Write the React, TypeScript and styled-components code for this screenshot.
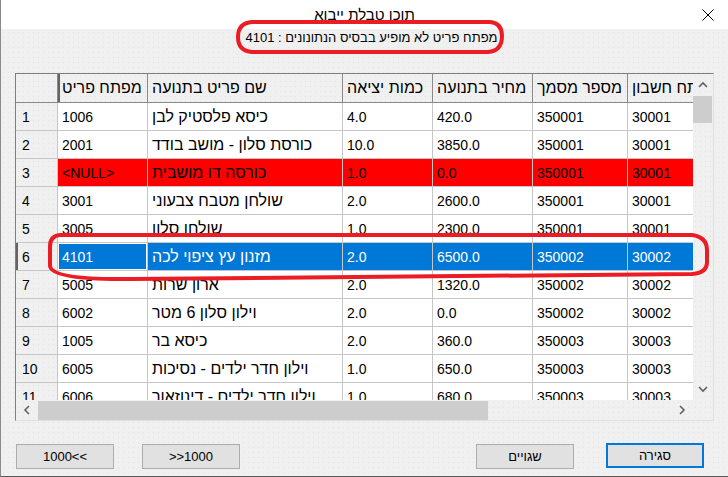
import React from "react";
import styled, { createGlobalStyle, css } from "styled-components";

const GlobalStyle = createGlobalStyle`
  html, body { margin: 0; padding: 0; background: #f0f0f0; }
  body { font-family: "Liberation Sans", "DejaVu Sans", sans-serif; }
  #root { width: 728px; height: 477px; }
`;

const dots = css`
  background-color: #f0f0f0;
  background-image: radial-gradient(circle, #e3e3e3 0.7px, transparent 1px);
  background-size: 5px 5px;
`;

const Window = styled.div`
  position: relative;
  width: 728px;
  height: 477px;
  box-sizing: border-box;
  border-left: 1px solid #8a8a8a;
  border-bottom: 1px solid #5a5a5a;
  display: flex;
  flex-direction: column;
  overflow: hidden;
  ${dots}
`;

const TitleBar = styled.div`
  flex: none;
  height: 29px;
  background: #fff;
  display: grid;
  grid-template-columns: 1fr auto 1fr;
  align-items: center;
`;

const Title = styled.div`
  grid-column: 2;
  font-size: 15px;
  color: #000;
  direction: rtl;
`;

const CloseBox = styled.div`
  grid-column: 3;
  justify-self: end;
  margin-right: 14px;
  width: 12px;
  height: 12px;
  display: flex;
`;

const LabelRow = styled.div`
  flex: none;
  height: 44px;
  text-align: center;
  padding-left: 14px;
  font-size: 13px;
  line-height: 17px;
  color: #000;
  direction: rtl;
`;

const TableFrame = styled.div`
  flex: none;
  margin-left: 14px;
  width: 699px;
  height: 348px;
  box-sizing: border-box;
  border: 1px solid;
  border-color: #7e7e7e #e0e0e0 #e0e0e0 #7e7e7e;
  display: grid;
  grid-template-columns: 677px 20px;
  grid-template-rows: 326px 20px;
`;

const Viewport = styled.div`
  overflow: hidden;
  background: #fff;
  font-size: 14px;
`;

type Variant = "normal" | "error" | "selected";

const Row = styled.div<{ $variant?: Variant; $header?: boolean }>`
  display: flex;
  height: ${(p) => (p.$header ? 29 : 28)}px;
  width: max-content;
  background: ${(p) =>
    p.$variant === "error" ? "#ff0000" : p.$variant === "selected" ? "#0078d7" : "#fff"};
  color: ${(p) => (p.$variant === "selected" ? "#fff" : "#000")};
`;

const Cell = styled.div<{ $w: number; $focus?: boolean; $heb?: boolean }>`
  flex: none;
  width: ${(p) => p.$w}px;
  box-sizing: border-box;
  padding-left: 4px;
  border-right: 1px solid #c6c6c6;
  border-bottom: 1px solid #c6c6c6;
  display: flex;
  align-items: center;
  white-space: nowrap;
  overflow: hidden;
  ${(p) =>
    p.$heb &&
    css`
      font-size: 16px;
    `}
  ${(p) => p.$focus && css`box-shadow: inset 0 0 0 1px #fff;`}
`;

const HeadCell = styled(Cell)<{ $current?: boolean }>`
  ${dots}
  color: #000;
  border-right-color: #8a8a8a;
  border-bottom-color: #8a8a8a;
  ${(p) => p.$current && css`box-shadow: inset 2px 0 0 #646464;`}
`;

const RowNumCell = styled.div<{ $current?: boolean; $header?: boolean }>`
  flex: none;
  width: 42px;
  box-sizing: border-box;
  padding-left: 6px;
  border-right: 1px solid ${(p) => (p.$header ? "#8a8a8a" : "#c6c6c6")};
  border-bottom: 1px solid ${(p) => (p.$header ? "#8a8a8a" : "#c6c6c6")};
  display: flex;
  align-items: center;
  color: #000;
  ${dots}
  ${(p) => p.$current && css`box-shadow: inset 2px 0 0 #646464;`}
`;

const VScroll = styled.div`
  grid-row: 1;
  grid-column: 2;
  display: flex;
  flex-direction: column;
  ${dots}
`;

const HScroll = styled.div`
  grid-row: 2;
  grid-column: 1;
  display: flex;
  ${dots}
`;

const Corner = styled.div`
  grid-row: 2;
  grid-column: 2;
  ${dots}
`;

const ArrowBox = styled.div<{ $vertical?: boolean }>`
  flex: none;
  width: ${(p) => (p.$vertical ? "100%" : "22px")};
  height: ${(p) => (p.$vertical ? "22px" : "100%")};
  display: flex;
  align-items: center;
  justify-content: center;
`;

const Track = styled.div<{ $vertical?: boolean }>`
  flex: 1;
  display: flex;
  flex-direction: ${(p) => (p.$vertical ? "column" : "row")};
`;

const Thumb = styled.div<{ $vertical?: boolean; $size: number }>`
  flex: none;
  background: #cdcdcd;
  ${(p) =>
    p.$vertical
      ? css`height: ${p.$size}px; width: 19px;`
      : css`width: ${p.$size}px; height: 19px; margin-top: 1px;`}
`;

const ButtonRow = styled.div`
  flex: none;
  margin-top: 23px;
  padding: 0 24px 0 15px;
  display: flex;
  justify-content: space-between;
`;

const ButtonGroup = styled.div<{ $gap: number }>`
  display: flex;
  gap: ${(p) => p.$gap}px;
  align-items: flex-start;
`;

const Button = styled.button<{ $primary?: boolean }>`
  width: 98px;
  height: 25px;
  box-sizing: border-box;
  margin: ${(p) => (p.$primary ? "-1px 0 0 0" : "0")};
  padding: 0;
  background: #e1e1e1;
  border: ${(p) => (p.$primary ? "2px solid #0078d7" : "1px solid #adadad")};
  font-family: "Liberation Sans", "DejaVu Sans", sans-serif;
  font-size: 13px;
  color: #000;
`;

const Overlay = styled.svg`
  position: absolute;
  left: -1px;
  top: 0;
  width: 728px;
  height: 477px;
  pointer-events: none;
`;

const Chevron = ({ dir }: { dir: "up" | "down" | "left" | "right" }) => {
  const pts: Record<string, string> = {
    up: "1,6 5,2 9,6",
    down: "1,2 5,6 9,2",
    left: "6,1 2,5 6,9",
    right: "2,1 6,5 2,9",
  };
  const vertical = dir === "up" || dir === "down";
  return (
    <svg width={vertical ? 10 : 8} height={vertical ? 8 : 10} viewBox={vertical ? "0 0 10 8" : "0 0 8 10"}>
      <polyline points={pts[dir]} fill="none" stroke="#606060" strokeWidth="1.6" />
    </svg>
  );
};

const isHeb = (s: string) => /[\u0590-\u05FF]/.test(s);

const columns = [
  { title: "מפתח פריט", w: 90 },
  { title: "שם פריט בתנועה", w: 195 },
  { title: "כמות יציאה", w: 90 },
  { title: "מחיר בתנועה", w: 100 },
  { title: "מספר מסמך", w: 95 },
  { title: "מפתח חשבון", w: 95 },
];

const rows: { cells: string[]; variant?: Variant }[] = [
  { cells: ["1006", "כיסא פלסטיק לבן", "4.0", "420.0", "350001", "30001"] },
  { cells: ["2001", "כורסת סלון - מושב בודד", "10.0", "3850.0", "350001", "30001"] },
  { cells: ["<NULL>", "כורסה דו מושבית", "1.0", "0.0", "350001", "30001"], variant: "error" },
  { cells: ["3001", "שולחן מטבח צבעוני", "2.0", "2600.0", "350001", "30001"] },
  { cells: ["3005", "שולחן סלון", "1.0", "2300.0", "350001", "30001"] },
  { cells: ["4101", "מזנון עץ ציפוי לכה", "2.0", "6500.0", "350002", "30002"], variant: "selected" },
  { cells: ["5005", "ארון שרות", "2.0", "1320.0", "350002", "30002"] },
  { cells: ["6002", "וילון סלון  6 מטר", "2.0", "0.0", "350002", "30002"] },
  { cells: ["1005", "כיסא בר", "2.0", "360.0", "350003", "30003"] },
  { cells: ["6005", "וילון חדר ילדים - נסיכות", "1.0", "650.0", "350003", "30003"] },
  { cells: ["6006", "וילון חדר ילדים - דינוזאור", "1.0", "680.0", "350003", "30003"] },
];

export default function App() {
  return (
    <>
      <GlobalStyle />
      <Window>
        <TitleBar>
          <Title>תוכן טבלת ייבוא</Title>
          <CloseBox>
            <svg width="12" height="12" viewBox="0 0 12 12">
              <path d="M0.5 0.5 L11.5 11.5 M11.5 0.5 L0.5 11.5" stroke="#000" strokeWidth="1" fill="none" />
            </svg>
          </CloseBox>
        </TitleBar>
        <LabelRow>מפתח פריט לא מופיע בבסיס הנתונונים : 4101</LabelRow>
        <TableFrame>
          <Viewport>
            <Row $header>
              <RowNumCell $header />
              {columns.map((c, i) => (
                <HeadCell key={c.title} $w={c.w} $heb $current={i === 0}>
                  {c.title}
                </HeadCell>
              ))}
            </Row>
            {rows.map((r, ri) => (
              <Row key={ri} $variant={r.variant}>
                <RowNumCell $current={r.variant === "selected"}>{ri + 1}</RowNumCell>
                {r.cells.map((v, ci) => (
                  <Cell
                    key={ci}
                    $w={columns[ci].w}
                    $heb={isHeb(v)}
                    $focus={r.variant === "selected" && ci === 0}
                  >
                    {v}
                  </Cell>
                ))}
              </Row>
            ))}
          </Viewport>
          <VScroll>
            <ArrowBox $vertical>
              <Chevron dir="up" />
            </ArrowBox>
            <Track $vertical>
              <Thumb $vertical $size={27} />
            </Track>
            <ArrowBox $vertical>
              <Chevron dir="down" />
            </ArrowBox>
          </VScroll>
          <HScroll>
            <ArrowBox>
              <Chevron dir="left" />
            </ArrowBox>
            <Track>
              <Thumb $size={450} />
            </Track>
            <ArrowBox>
              <Chevron dir="right" />
            </ArrowBox>
          </HScroll>
          <Corner />
        </TableFrame>
        <ButtonRow>
          <ButtonGroup $gap={28}>
            <Button>1000&lt;&lt;</Button>
            <Button>&gt;&gt;1000</Button>
          </ButtonGroup>
          <ButtonGroup $gap={32}>
            <Button>שגויים</Button>
            <Button $primary>סגירה</Button>
          </ButtonGroup>
        </ButtonRow>
        <Overlay viewBox="0 0 728 477">
          <path
            d="M252 22 L490 22 Q502 23 502 36 Q502 51 488 52 L252 52 Q238 51 238 37 Q238 23 252 22 Z"
            fill="none"
            stroke="#ec1c24"
            strokeWidth="4"
          />
          <path
            d="M60 235 L692 235 Q707 237 707 250 L707 262 Q707 273 692 274 L130 279 Q52 280 50 266 L50 246 Q50 236 60 235 Z"
            fill="none"
            stroke="#ec1c24"
            strokeWidth="4"
          />
        </Overlay>
      </Window>
    </>
  );
}
